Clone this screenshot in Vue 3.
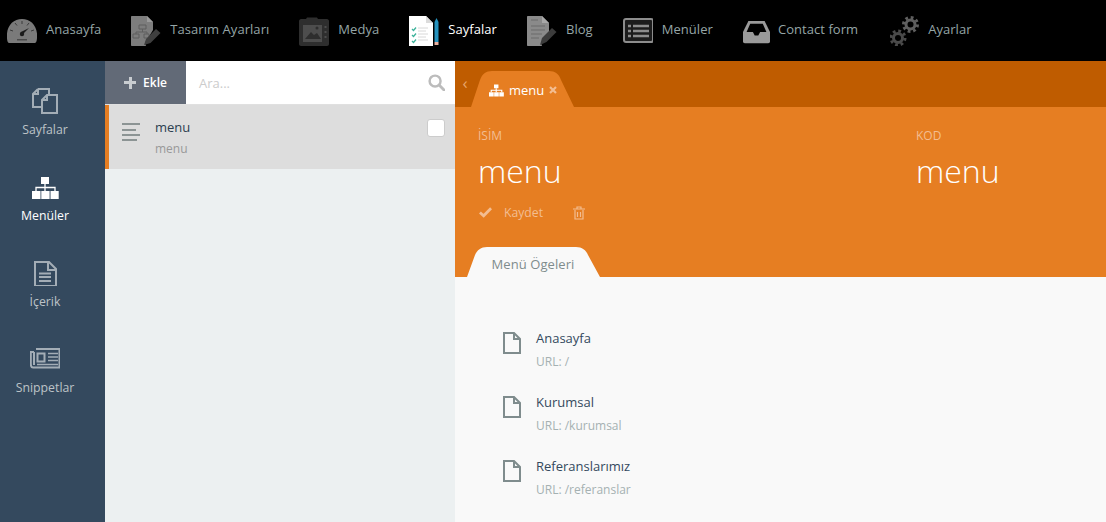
<script setup>
const topItems = [
  { label: 'Anasayfa', icon: 'gauge' },
  { label: 'Tasarım Ayarları', icon: 'design' },
  { label: 'Medya', icon: 'camera' },
  { label: 'Sayfalar', icon: 'pages', active: true },
  { label: 'Blog', icon: 'blog' },
  { label: 'Menüler', icon: 'list' },
  { label: 'Contact form', icon: 'inbox' },
  { label: 'Ayarlar', icon: 'gears' }
]

const sideItems = [
  { label: 'Sayfalar', icon: 'copy' },
  { label: 'Menüler', icon: 'sitemap', active: true },
  { label: 'İçerik', icon: 'doc' },
  { label: 'Snippetlar', icon: 'news' }
]

const menuItems = [
  { title: 'Anasayfa', url: 'URL: /' },
  { title: 'Kurumsal', url: 'URL: /kurumsal' },
  { title: 'Referanslarımız', url: 'URL: /referanslar' }
]
</script>

<template>
  <div class="app">
    <header class="topbar">
      <a v-for="item in topItems" :key="item.label" class="top-item" :class="[item.icon, { active: item.active }]">
        <svg class="top-icon" viewBox="0 0 30 30" preserveAspectRatio="xMinYMid meet">
          <template v-if="item.icon === 'gauge'">
            <path d="M0 22C-1 10 6 3 15 3s16 7 15 19c0 1-.5 5-2 5H2c-1.500 0-2-4-2-5z" fill="#7a7a7a" />
            <path d="M15 5v3M8 7l2 2.500M22 7l-2 2.500M3 14l3 1M27 14l-3 1" stroke="#3a3a3a" stroke-width="1" />
            <path d="M14 16l8-4-6 6z" fill="#1c1c1c" />
            <circle cx="15" cy="18" r="2.200" fill="#1c1c1c" />
            <path d="M10 23h10v1.500H10z" fill="#4a4a4a" />
          </template>
          <template v-else-if="item.icon === 'design'">
            <path d="M0 1C0 .4.400 0 1 0h15l6 6v8l-8 13 1 3H1c-.6 0-1-.4-1-1z" fill="#7d7d7d" />
            <path d="M16 0v6h6z" fill="#9a9a9a" />
            <path d="M8 9h7v4H8zM2 18h6v4H2zM13 18h5v4h-5zM11.500 13v3M5 18v-2h11v2" fill="none" stroke="#5f5f5f" stroke-width="1" />
            <path d="M13 29l2-6 10-10 4.500 4-10 10z" fill="#3f3f3f" />
          </template>
          <template v-else-if="item.icon === 'camera'">
            <path d="M2 3h5l1-1.500h10L19 3h9c1 0 2 1 2 2v23c0 1-1 2-2 2H2c-1 0-2-1-2-2V5c0-1 1-2 2-2z" fill="#2e2e2e" />
            <path d="M4 9h19v17H4z" fill="#4d4d4d" />
            <path d="M6 23l6-7 3 3 3-2 4 6z" fill="#2e2e2e" />
            <circle cx="18" cy="12" r="1.500" fill="#2e2e2e" />
            <path d="M25.500 10h2v2h-2zM25.500 15h2v2h-2zM25.500 20h2v2h-2z" fill="#4d4d4d" />
          </template>
          <template v-else-if="item.icon === 'pages'">
            <path d="M0 0h17l7 7v23H0z" fill="#fff" />
            <path d="M17 0v7h7z" fill="#dcdcdc" />
            <path d="M3 13l1.500 1.500L7 11.500M3 19l1.500 1.500L7 17.500M3 25l1.500 1.500L7 23.500" stroke="#3cb29a" stroke-width="1.300" fill="none" />
            <path d="M9 12h10M9 15h8M9 18h10M9 21h8M9 24h10" stroke="#d8d8d8" stroke-width="1" />
            <path d="M25.500 6l2-4 2 4v20h-4z" fill="#2692bd" />
            <path d="M25.500 26h4v3h-4z" fill="#e9b0a0" />
          </template>
          <template v-else-if="item.icon === 'blog'">
            <path d="M0 1C0 .4.400 0 1 0h14l7 7v9l-8 11 1 3H1c-.6 0-1-.4-1-1z" fill="#8a8a8a" />
            <path d="M15 0v7h7z" fill="#a8a8a8" />
            <path d="M4 4h7M4 10h14M4 14h14M4 18h11M4 22h8" stroke="#6a6a6a" stroke-width="1" />
            <path d="M13 29l2-7 10-10 4.500 4-10 10z" fill="#3c3c3c" />
          </template>
          <template v-else-if="item.icon === 'list'">
            <rect x="1" y="3" width="29" height="23" rx="2" fill="#1c1c1c" stroke="#8c8c8c" stroke-width="2" />
            <path d="M5 10h3M5 15h3M5 20h3M10 10h16M10 15h16M10 20h16" stroke="#8c8c8c" stroke-width="2.500" />
          </template>
          <template v-else-if="item.icon === 'inbox'">
            <path d="M6 4h18l6 12v11c0 1-1 1.500-2 1.500H2c-1 0-2-.5-2-1.500V16z" fill="#9a9a9a" />
            <path d="M8 7h14l4 9h-7l-2 4h-4l-2-4H4z" fill="#000" />
          </template>
          <template v-else-if="item.icon === 'gears'">
            <g fill="none" stroke="#5f5f5f">
              <circle cx="20.500" cy="8.500" r="4.500" stroke-width="3" />
              <circle cx="20.500" cy="8.500" r="7" stroke-width="3" stroke-dasharray="2.750 2.750" />
            </g>
            <g fill="none" stroke="#4a4a4a">
              <circle cx="8" cy="22" r="4.500" stroke-width="3" />
              <circle cx="8" cy="22" r="7" stroke-width="3" stroke-dasharray="2.750 2.750" />
            </g>
          </template>
        </svg>
        <span class="top-label">{{ item.label }}</span>
      </a>
    </header>

    <div class="body">
      <aside class="sidebar">
        <a v-for="item in sideItems" :key="item.label" class="side-item" :class="{ active: item.active }">
          <svg class="side-icon" viewBox="0 0 30 28" fill="none" stroke="currentColor" stroke-width="2">
            <template v-if="item.icon === 'copy'">
              <path d="M8 3H19V8M8 3L3 8V21H12" />
              <path d="M8 3V8H3" />
              <path d="M17 9H27V27H12V14z" />
              <path d="M17 9V14H12" />
            </template>
            <template v-else-if="item.icon === 'sitemap'">
              <path d="M11 5h8v7h-8zM2 19h8.500v8H2zM11.300 19h8.300v8h-8.300zM20.500 19h8.200v8h-8.200z" fill="currentColor" stroke="none" />
              <path d="M15 12v7M6 19v-3.500h19V19" stroke-width="1.300" />
            </template>
            <template v-else-if="item.icon === 'doc'">
              <path d="M5 4h14l7 7v17H5z" />
              <path d="M18 4v8h8" />
              <path d="M9 15.500h12M9 19h12M9 23h12" stroke-width="2" />
            </template>
            <template v-else>
              <path d="M6 5h23.500v18.500H3C1 23.500.8 22 .8 20V8H4" />
              <path d="M4 8v13" />
              <path d="M7.500 9.500h7v8h-7z" />
              <path d="M18 9.500h10M18 13h10M18 16.500h10M7 20.500h21" stroke-width="1.600" />
            </template>
          </svg>
          <span>{{ item.label }}</span>
        </a>
      </aside>

      <section class="list-pane">
        <div class="search-row">
          <button class="add-btn"><span class="plus"></span>Ekle</button>
          <div class="search">
            <span class="placeholder">Ara...</span>
            <svg class="search-icon" viewBox="0 0 18 18" fill="none" stroke="#bcbcbc">
              <circle cx="7.500" cy="7.500" r="5.800" stroke-width="2.600" />
              <path d="M12 12l5 5" stroke-width="3" stroke-linecap="round" />
            </svg>
          </div>
        </div>
        <div class="list-row">
          <svg class="lines" viewBox="0 0 18 18" stroke="#8c9494" stroke-width="2">
            <path d="M0 1h18M0 7h14M0 12h18M0 17h15" />
          </svg>
          <div class="list-text">
            <div class="list-title">menu</div>
            <div class="list-sub">menu</div>
          </div>
          <span class="check"></span>
        </div>
      </section>

      <main class="detail">
        <div class="tabbar">
          <span class="back">‹</span>
          <div class="tab">
            <svg class="tab-shape" viewBox="0 0 103 36" preserveAspectRatio="none">
              <path d="M0 36L9 9C11 3 15 0 21 0H78C84 0 88 3 90 9L103 36z" fill="#e67e22" />
            </svg>
            <svg class="tab-icon" viewBox="2 5 27 22" fill="none" stroke="#fff" stroke-width="2">
              <path d="M11 5h8v7h-8zM2 19h8.500v8H2zM11.300 19h8.300v8h-8.300zM20.500 19h8.200v8h-8.200z" fill="#fff" stroke="none" />
              <path d="M15 12v7M6 19v-3.500h19V19" />
            </svg>
            <span class="tab-label">menu</span>
            <svg class="tab-close" viewBox="0 0 8 8" stroke="#f3bd91" stroke-width="2.200">
              <path d="M1 1l6 6M7 1L1 7" />
            </svg>
          </div>
        </div>

        <div class="head">
          <div class="fields">
            <div>
              <div class="field-label">İSİM</div>
              <div class="field-value">menu</div>
            </div>
            <div>
              <div class="field-label">KOD</div>
              <div class="field-value">menu</div>
            </div>
          </div>
          <div class="actions">
            <svg class="check-icon" viewBox="0 0 14 11" fill="none" stroke="currentColor" stroke-width="3">
              <path d="M1 5.500l4 3.500 8-8" />
            </svg>
            <span class="save">Kaydet</span>
            <svg class="trash" viewBox="0 0 12 14" fill="none" stroke="currentColor" stroke-width="1.200">
              <path d="M2 4v9h8V4M0 3h12M4 3V1h4v2M4.500 6v5M7.500 6v5" />
            </svg>
          </div>
          <div class="subtabs">
            <div class="subtab">
              <svg class="tab-shape" viewBox="0 0 133 30" preserveAspectRatio="none">
                <path d="M0 30L8 8C10 3 14 0 20 0H109C115 0 119 3 121 8L133 30z" fill="#f9f9f9" />
              </svg>
              <span class="subtab-label">Menü Ögeleri</span>
            </div>
          </div>
        </div>

        <div class="items">
          <div v-for="item in menuItems" :key="item.title" class="item">
            <svg class="item-icon" viewBox="0 0 18 22" fill="none" stroke="#7f8c8d" stroke-width="2">
              <path d="M1 1h10l6 6v14H1z" />
              <path d="M11 1v6h6" />
            </svg>
            <div>
              <div class="item-title">{{ item.title }}</div>
              <div class="item-url">{{ item.url }}</div>
            </div>
          </div>
        </div>
      </main>
    </div>
  </div>
</template>

<style scoped>
.app {
  width: 1106px;
  height: 522px;
  overflow: hidden;
  font-family: "Open Sans", "Liberation Sans", sans-serif;
  font-size: 13px;
  color: #2c3e50;
}

.topbar {
  height: 61px;
  background: #000;
  display: flex;
  align-items: center;
  padding-left: 7px;
  box-sizing: border-box;
}

.top-item {
  display: flex;
  align-items: center;
  margin-right: 30px;
  color: #95a5a6;
}

.top-item.active {
  color: #fff;
}

.top-icon {
  width: 30px;
  height: 30px;
  margin-right: 9px;
  flex-shrink: 0;
}

.inbox .top-icon {
  width: 27px;
  margin-right: 8px;
}

.gears .top-icon {
  margin-left: 2px;
  margin-right: 8px;
}

.top-label {
  white-space: nowrap;
  letter-spacing: 0.05px;
  margin-bottom: 3px;
}

.body {
  display: flex;
  height: 461px;
}

.sidebar {
  width: 105px;
  flex-shrink: 0;
  background: #34495e;
  padding: 25px 15px 0 0;
  box-sizing: border-box;
}

.side-item {
  display: flex;
  flex-direction: column;
  align-items: center;
  height: 86px;
  color: #bdc3c7;
  font-size: 12.3px;
}

.side-item.active {
  color: #fff;
}

.side-icon {
  width: 30px;
  height: 28px;
  margin-bottom: 7px;
  color: #a3adb6;
}

.side-item.active .side-icon {
  color: #fff;
}

.list-pane {
  width: 350px;
  flex-shrink: 0;
  background: #ecf0f1;
}

.search-row {
  display: flex;
  height: 44px;
  border-bottom: 1px solid #e0e0e0;
  box-sizing: border-box;
  background: #fff;
}

.add-btn {
  width: 81px;
  border: 0;
  background: #626a77;
  color: #fff;
  font: 600 12px "Open Sans", sans-serif;
  display: flex;
  align-items: center;
  justify-content: center;
  gap: 7px;
  padding: 0;
}

.plus {
  width: 12px;
  height: 12px;
  background:
    linear-gradient(#c8ccd0, #c8ccd0) center / 12px 3px no-repeat,
    linear-gradient(#c8ccd0, #c8ccd0) center / 3px 12px no-repeat;
}

.search {
  flex: 1;
  display: flex;
  align-items: center;
  justify-content: space-between;
  padding: 0 10px 0 13px;
}

.placeholder {
  color: #ccc;
}

.search-icon {
  width: 17px;
  height: 17px;
}

.list-row {
  height: 64px;
  background: #dddddd;
  border-left: 4px solid #e67e22;
  box-sizing: border-box;
  display: flex;
  align-items: flex-start;
  padding: 12px 10px 0 13px;
}

.lines {
  width: 18px;
  height: 18px;
  margin-top: 6px;
  margin-right: 15px;
}

.list-text {
  flex: 1;
  line-height: 21px;
}

.list-sub {
  color: #999;
  font-size: 12px;
}

.check {
  width: 16px;
  height: 16px;
  margin-top: 2px;
  background: #fff;
  border: 1px solid #ccc;
  border-radius: 3px;
}

.detail {
  flex: 1;
  background: #f9f9f9;
}

.tabbar {
  height: 46px;
  background: #bf5c00;
  display: flex;
  align-items: flex-end;
  position: relative;
}

.back {
  color: #e8a66c;
  font-size: 17px;
  line-height: 44px;
  width: 20px;
  margin-right: -4px;
  text-align: center;
  align-self: flex-start;
}

.tab {
  position: relative;
  width: 103px;
  height: 36px;
  display: flex;
  align-items: center;
  box-sizing: border-box;
  padding: 2px 0 0 18px;
  color: #fff;
}

.tab-shape {
  position: absolute;
  left: 0;
  top: 0;
  width: 100%;
  height: 100%;
}

.tab-icon {
  position: relative;
  width: 15px;
  height: 13px;
  margin-right: 5px;
}

.tab-label {
  position: relative;
}

.tab-close {
  position: relative;
  width: 8px;
  height: 8px;
  margin-left: 5px;
}

.head {
  height: 170px;
  background: #e67e22;
  padding-top: 20px;
  box-sizing: border-box;
  position: relative;
}

.fields {
  display: grid;
  grid-template-columns: 438px 1fr;
  padding-left: 23px;
}

.field-label {
  color: #f3bd91;
  font-size: 12px;
  line-height: 17px;
}

.field-value {
  color: #fff;
  font-size: 32px;
  font-weight: 300;
  line-height: 42px;
  margin-top: 6px;
}

.actions {
  display: flex;
  align-items: center;
  padding-left: 24px;
  margin-top: 12px;
  color: #f3bd91;
  font-size: 12.2px;
}

.check-icon {
  width: 13px;
  height: 11px;
  margin-right: 12px;
}

.trash {
  width: 12px;
  height: 14px;
  margin-left: 30px;
}

.subtabs {
  position: absolute;
  left: 12px;
  bottom: 0;
}

.subtab {
  position: relative;
  width: 133px;
  height: 30px;
  display: flex;
  align-items: center;
  justify-content: center;
  color: #7f8c8d;
}

.subtab-label {
  position: relative;
  margin-right: 1px;
  padding-top: 4px;
  letter-spacing: 0.08px;
}

.items {
  padding: 50px 0 0 48px;
}

.item {
  display: flex;
  height: 64px;
  line-height: 23px;
}

.item-icon {
  width: 18px;
  height: 22px;
  margin: 5px 15px 0 0;
}

.item-title {
  color: #34495e;
}

.item-url {
  color: #a5b1b2;
  font-size: 12px;
}
</style>
